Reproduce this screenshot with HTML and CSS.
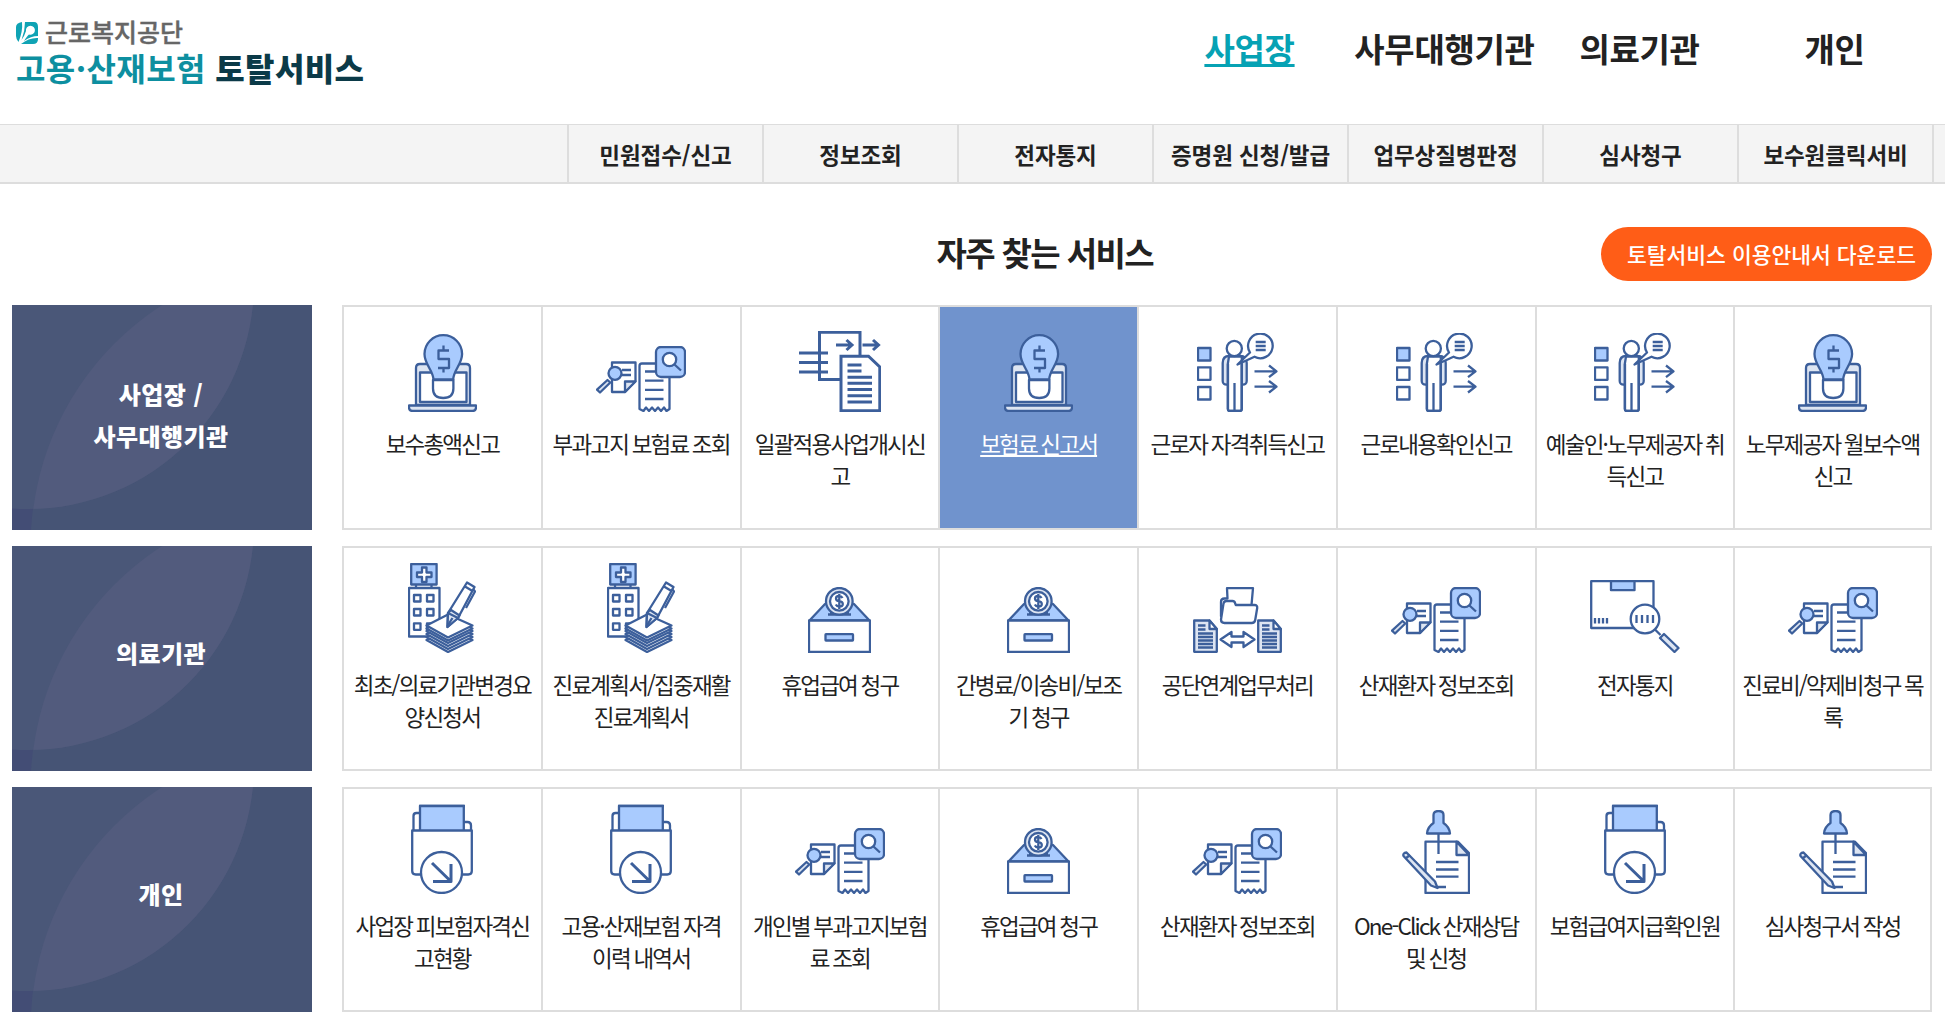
FILE: index.html
```html
<!DOCTYPE html>
<html lang="ko">
<head>
  <meta charset="UTF-8">
  <meta name="viewport" content="width=device-width, initial-scale=1.0">
  <title>근로복지공단 고용·산재보험 토탈서비스</title>
  <link rel="stylesheet" href="styles.css">
</head>
<body>

  <!-- icon sprite -->
  <svg class="sprite" width="0" height="0">
    <symbol id="ic-laptop" viewBox="0 0 69 78">
      <path class="t" d="M8 71V34q0-4 4-4h46q4 0 4 4v37z"/>
      <rect class="w" x="12" y="38.500" width="46.500" height="29.500"/>
      <path class="t" d="M1 71.500h67v2q0 3.500-3.500 3.500h-60Q1 77 1 73.500z"/>
      <path class="w" d="M25 46v8.500q0 9.500 10.200 9.500t10.200-9.500V46z"/>
      <path class="b" d="M25.500 45.500C25 36 16.500 30.500 16.500 20a18.800 18.800 0 0 1 37.600 0C54 30.500 45.500 36 45.200 45.500z"/>
      <path class="n" d="M41 16.500H30.500V25H41v9H30M35.500 11.500v5M35.500 34v4.500"/>
    </symbol>

    <symbol id="ic-search" viewBox="0 0 90 66">
      <path class="w" d="M39.500 16.500H16V46h13l10.500-11z"/>
      <path class="t" d="M29 46V35.500h10.500z"/>
      <path class="n" d="M26 24h9M26 29h9"/>
      <path class="t" d="M11.500 34l2.800 2.500L4 46.500 1 43.700z"/>
      <circle class="b" cx="19" cy="27.300" r="6.500"/>
      <path class="w" d="M43.500 63V20q0-2.500 2.500-2.500h25q2.500 0 2.500 2.500v43l-3 2-2.500-3.500-3 3.500-3-3.500-3 3.500-3-3.500-3 3.500-3-3.500-2.500 3.500z"/>
      <path class="n" d="M49 25.500h18.500M49 34.700h18.500M49 43.800h18.500M49 53h18.500"/>
      <rect class="b" x="60" y="1" width="29" height="30" rx="5"/>
      <circle class="w" cx="73.500" cy="13.500" r="6.700"/>
      <path class="n" d="M78.500 18.500l6.500 6"/>
    </symbol>

    <symbol id="ic-transfer" viewBox="0 0 82 81">
      <g class="bold">
        <path class="n" d="M42 48.500H20.500V1.200H61V25"/>
        <path class="n" d="M0 22h29M0 31.500h29M0 41h29"/>
        <path class="n" d="M37 14h16M47.500 9l5.500 5-5.500 5M63.500 14h16M74 9l5.500 5-5.500 5"/>
        <path class="w" d="M42 25.200h27.500L80.800 36v43.800H42z"/>
        <path class="n" d="M48.500 34h14M48.500 40h14M48.500 46.300H73M48.500 52.300H73M48.500 58.500H73M48.500 64.700H73M48.500 71H73"/>
      </g>
    </symbol>

    <symbol id="ic-worker" viewBox="0 0 81 79">
      <rect class="b" x="1" y="15" width="12.500" height="12.500"/>
      <rect class="w" x="1" y="34.300" width="12.500" height="12.500"/>
      <rect class="w" x="1" y="54" width="12.500" height="12.500"/>
      <path class="t" d="M30.500 51.500q-4.800.5-4.800-3.500V30q0-7 6.500-7h11q6.500 0 6.500 7v18q0 4-4.800 3.500z"/>
      <path class="w" d="M30.800 31v45q0 2 2 2h10q2 0 2-2V31V23.500H32z" stroke="none"/>
      <path class="n" d="M31 31v45q0 2 2 2h9.500q2.200 0 2.200-2V31M37.500 50v28"/>
      <circle class="w" cx="37.300" cy="15.500" r="7.600"/>
      <path class="w" d="M53 19.500A12.300 12.300 0 1 1 57.500 23.700L40.500 31.500z"/>
      <path class="n" d="M58.700 9h10M58.700 13h10M58.700 17h10"/>
      <path class="n" d="M57.500 38.300h22M72 32.500l7.500 5.800-7.500 5.800M57.500 53.700h22M72 48l7.500 5.700-7.500 5.800"/>
    </symbol>

    <symbol id="ic-hospital" viewBox="0 0 68 90">
      <path class="n" d="M8 21v4M23.500 21v4"/>
      <rect class="b" x="3.200" y="1" width="25.400" height="20.500"/>
      <path class="w" d="M14 4.500h4.500v5h5V14h-5v5H14v-5H9V9.500h5z"/>
      <rect class="w" x="1" y="25" width="30.500" height="48.500"/>
      <path class="n" d="M6 32h6.500v6.500H6zM19 32h6.500v6.500H19zM6 46h6.500v6.500H6zM19 46h6.500v6.500H19zM6 60.300h6.500v6.500H6zM19 60.300h6.500v6.500H19z"/>
      <path class="w" d="M18.500 77L40 65.500 64.500 77 40 89z"/>
      <path class="w" d="M18.500 74L40 62.500 64.500 74 40 86z"/>
      <path class="w" d="M18.500 71L40 59.500 64.500 71 40 83z"/>
      <path class="w" d="M18.500 68L40 56.500 64.500 68 40 80z"/>
      <path class="w" d="M18.500 65.500L40 54 64.500 65.500 40 77.500z"/>
      <path class="w" d="M18.500 62.500L40 51.500 64.500 62.500 40 74.500z"/>
      <path class="w" d="M39.500 64l.5-14 19-30.500 7.500 4.500L50 55z"/>
      <path class="t" d="M39.500 64l.5-14 3-3 8.500 5.500-1.500 2.500z"/>
      <path class="n" d="M40 50l10 5M57 23.500l7.500 4.500M65 26l2 2.500L58 45M39.500 63l5-8"/>
    </symbol>

    <symbol id="ic-donate" viewBox="0 0 63 66">
      <path class="b" d="M1.500 33.500L17 17h29l15.500 16.500z"/>
      <rect class="w" x="1" y="33.500" width="61" height="31.500"/>
      <rect class="b" x="17.500" y="47.200" width="27.500" height="6.300" rx=".5"/>
      <path class="n" d="M20 27.500h23M22 25h19"/>
      <circle class="t" cx="31.300" cy="14.300" r="13.300"/>
      <circle class="w" cx="31.300" cy="14.300" r="9.300"/>
      <path class="n" d="M34.500 11q-1-2-3.500-2-3 0-3 2.500t3.300 2.700q3.500.3 3.500 2.900t-3.500 2.500q-2.500 0-3.500-2M31.300 7v15"/>
    </symbol>

    <symbol id="ic-folder" viewBox="0 0 89 66">
      <path class="w" d="M28 29V15q0-3.500 3.500-3.500h3L34 1.200h26L58.500 18z"/>
      <path class="w" d="M28 32.500l2.500-16q.5-2.500 3-2.500h6q2 0 2.500 2l.8 2h18.700q3 0 2.700 3l-2 12q-.5 3-3.500 3H31.500q-3.500 0-3.500-3.500z"/>
      <path class="t" d="M1.200 33.500h15.300l7.300 8.500v22.800H1.200z"/>
      <path class="w" d="M16.500 33.500v8.500h7.300z"/>
      <path class="n" d="M5 38.500h7.500M5 42.500h7.500M5 46.500h15M5 50h15M5 53.500h15M5 57h15M5 60.500h15"/>
      <path class="t" d="M65.200 33.500h15.300l7.300 8.500v22.800H65.200z"/>
      <path class="w" d="M80.500 33.500v8.500h7.300z"/>
      <path class="n" d="M69 38.500h7.500M69 42.500h7.500M69 46.500h15M69 50h15M69 53.500h15M69 57h15M69 60.500h15"/>
      <path class="w" d="M27.500 52.500L38.500 45v4.500h12V45l11 7.500-11 7.500v-4.500h-12V60z"/>
    </symbol>

    <symbol id="ic-parcel" viewBox="0 0 90 73">
      <rect class="w" x="1.200" y="1.200" width="62.300" height="46.800"/>
      <rect class="b" x="21" y="1.200" width="23.500" height="9"/>
      <path class="n" d="M5 38v5.500M9 38v5.500M13 38v5.500M17 38v5.500"/>
      <circle class="w" cx="55" cy="39" r="14.300"/>
      <path class="n" d="M46.500 35v8M52 35v8M57.500 35v8M63 35v8M65 49.500l5.500 5.500"/>
      <path class="t" d="M70 58l4-4 14.500 14-4 4z"/>
    </symbol>

    <symbol id="ic-download" viewBox="0 0 62 90">
      <path class="w" d="M2.500 28V12q0-3 3-3h4v18M52 18h4.500q3.500 0 3.500 3.500V28"/>
      <rect class="b" x="9" y="1.800" width="43.800" height="26"/>
      <path class="n" d="M8 2h46"/>
      <path class="w" d="M1.200 26.500h59.600V67q0 3.500-3.500 3.500H4.700q-3.500 0-3.500-3.500z"/>
      <circle class="w" cx="30.500" cy="68.500" r="20.500"/>
      <path class="n thick" d="M21 59l19 18.500M40 60v17.500H22"/>
    </symbol>

    <symbol id="ic-pin" viewBox="0 0 68 84">
      <path class="w" d="M23.500 31.700H56L67 43v40H23.500z"/>
      <path class="t" d="M54.500 31.700V45H67z"/>
      <path class="n" d="M36.500 23v21M34 52h22.500M34 59.500h22.500M34 66.700h22.500M34 77h10"/>
      <path class="b" d="M31.500 5q0-4 5-4t5 4v8q6 4 6.500 10.500H25Q25.500 17 31.500 13z"/>
      <path class="t" d="M1.500 46q-1-3 3-3.500L33 71.500l2.500 6.500-6.500-2.500z"/>
      <path class="n" d="M3.500 48.500L8 45"/>
    </symbol>

    <symbol id="bg-circles" viewBox="0 0 300 225">
      <clipPath id="leaf"><circle cx="16" cy="-22" r="226"/></clipPath>
      <rect width="300" height="225" fill="#434d75"/>
      <path d="M19 225A285 285 0 0 1 150 0H300V225z" fill="#465475"/>
      <circle cx="16" cy="-22" r="226" fill="#4a5778"/>
      <circle cx="304" cy="240" r="285" fill="#525b7d" clip-path="url(#leaf)"/>
    </symbol>
  </svg>

  <header>
    <h1 class="logo">
      <span class="logo-top">
        <svg class="logo-mark" viewBox="0 0 22 22">
          <path d="M9 0H18Q22 0 22 5V14Q15 14 8 19Q11 14 13 12.500A4.500 4.500 0 1 0 10 9Q8.500 14 5.500 18Q9 9 9 0z" fill="#0fa3b4"/>
          <path d="M6 0Q7 9 2.500 20Q0 17 0 14V5Q0 1 6 0zM5 22Q13 15.500 22 16V17Q22 22 17 22z" fill="#0fa3b4"/>
        </svg>
        <span>근로복지공단</span>
      </span>
      <span class="logo-bottom">고용·산재보험 <b>토탈서비스</b></span>
    </h1>
    <nav class="main-nav">
      <a href="#" class="active">사업장</a>
      <a href="#">사무대행기관</a>
      <a href="#">의료기관</a>
      <a href="#">개인</a>
    </nav>
  </header>

  <nav class="sub-nav">
    <a href="#">민원접수/신고</a>
    <a href="#">정보조회</a>
    <a href="#">전자통지</a>
    <a href="#">증명원 신청/발급</a>
    <a href="#">업무상질병판정</a>
    <a href="#">심사청구</a>
    <a href="#">보수원클릭서비</a>
    <span class="end"></span>
  </nav>

  <main>
    <div class="title-bar">
      <h2>자주 찾는 서비스</h2>
      <a href="#" class="btn-guide">토탈서비스 이용안내서 다운로드</a>
    </div>

    <section class="service">
      <h3 class="two-line"><svg class="deco"><use href="#bg-circles"/></svg><span>사업장 /<br>사무대행기관</span></h3>
      <ul>
        <li><a href="#"><i><svg width="69" height="78"><use href="#ic-laptop"/></svg></i><span>보수총액신고</span></a></li>
        <li><a href="#"><i><svg width="90" height="66"><use href="#ic-search"/></svg></i><span>부과고지 보험료 조회</span></a></li>
        <li><a href="#"><i><svg width="82" height="81"><use href="#ic-transfer"/></svg></i><span>일괄적용사업개시신<br>고</span></a></li>
        <li class="on"><a href="#"><i><svg width="69" height="78"><use href="#ic-laptop"/></svg></i><span>보험료 신고서</span></a></li>
        <li><a href="#"><i><svg width="81" height="79"><use href="#ic-worker"/></svg></i><span>근로자 자격취득신고</span></a></li>
        <li><a href="#"><i><svg width="81" height="79"><use href="#ic-worker"/></svg></i><span>근로내용확인신고</span></a></li>
        <li><a href="#"><i><svg width="81" height="79"><use href="#ic-worker"/></svg></i><span>예술인·노무제공자 취<br>득신고</span></a></li>
        <li><a href="#"><i><svg width="69" height="78"><use href="#ic-laptop"/></svg></i><span>노무제공자 월보수액<br>신고</span></a></li>
      </ul>
    </section>

    <section class="service">
      <h3><svg class="deco"><use href="#bg-circles"/></svg><span>의료기관</span></h3>
      <ul>
        <li><a href="#"><i><svg width="68" height="90"><use href="#ic-hospital"/></svg></i><span>최초/의료기관변경요<br>양신청서</span></a></li>
        <li><a href="#"><i><svg width="68" height="90"><use href="#ic-hospital"/></svg></i><span>진료계획서/집중재활<br>진료계획서</span></a></li>
        <li><a href="#"><i><svg width="63" height="66"><use href="#ic-donate"/></svg></i><span>휴업급여 청구</span></a></li>
        <li><a href="#"><i><svg width="63" height="66"><use href="#ic-donate"/></svg></i><span>간병료/이송비/보조<br>기 청구</span></a></li>
        <li><a href="#"><i><svg width="89" height="66"><use href="#ic-folder"/></svg></i><span>공단연계업무처리</span></a></li>
        <li><a href="#"><i><svg width="90" height="66"><use href="#ic-search"/></svg></i><span>산재환자 정보조회</span></a></li>
        <li><a href="#"><i><svg width="90" height="73"><use href="#ic-parcel"/></svg></i><span>전자통지</span></a></li>
        <li><a href="#"><i><svg width="90" height="66"><use href="#ic-search"/></svg></i><span>진료비/약제비청구 목<br>록</span></a></li>
      </ul>
    </section>

    <section class="service">
      <h3><svg class="deco"><use href="#bg-circles"/></svg><span>개인</span></h3>
      <ul>
        <li><a href="#"><i><svg width="62" height="90"><use href="#ic-download"/></svg></i><span>사업장 피보험자격신<br>고현황</span></a></li>
        <li><a href="#"><i><svg width="62" height="90"><use href="#ic-download"/></svg></i><span>고용·산재보험 자격<br>이력 내역서</span></a></li>
        <li><a href="#"><i><svg width="90" height="66"><use href="#ic-search"/></svg></i><span>개인별 부과고지보험<br>료 조회</span></a></li>
        <li><a href="#"><i><svg width="63" height="66"><use href="#ic-donate"/></svg></i><span>휴업급여 청구</span></a></li>
        <li><a href="#"><i><svg width="90" height="66"><use href="#ic-search"/></svg></i><span>산재환자 정보조회</span></a></li>
        <li><a href="#"><i><svg width="68" height="84"><use href="#ic-pin"/></svg></i><span>One-Click 산재상담<br>및 신청</span></a></li>
        <li><a href="#"><i><svg width="62" height="90"><use href="#ic-download"/></svg></i><span>보험급여지급확인원</span></a></li>
        <li><a href="#"><i><svg width="68" height="84"><use href="#ic-pin"/></svg></i><span>심사청구서 작성</span></a></li>
      </ul>
    </section>
  </main>

</body>
</html>
```
FILE: styles.css
```css
* {
  box-sizing: border-box;
  margin: 0;
  padding: 0;
}

body {
  font-family: 'Noto Sans CJK KR', sans-serif;
  color: #222;
  background: #fff;
  overflow: hidden;
}

a {
  color: inherit;
  text-decoration: none;
}

ul {
  list-style: none;
}

.sprite {
  display: block;
}

/* icon colours */
.w, .t, .b, .n {
  stroke: #3c5f9b;
  stroke-width: 2.3;
  stroke-linejoin: round;
}

.w { fill: #fff; }
.t { fill: #dde5f2; }
.b { fill: #a9cbfe; }
.n { fill: none; }

.bold * {
  stroke-width: 3;
  stroke-linejoin: miter;
}

.thick {
  stroke-width: 3;
}

/* header */
header {
  display: flex;
  justify-content: space-between;
  height: 124px;
  padding: 0 13px 0 16px;
}

.logo {
  display: flex;
  flex-direction: column;
  padding-top: 17px;
}

.logo-top {
  display: flex;
  align-items: center;
  gap: 7px;
  height: 32px;
  line-height: 28px;
  font-size: 25px;
  font-weight: 500;
  color: #666;
}

.logo-top span {
  height: 32px;
  -webkit-text-stroke: 0.4px #666;
}

.logo-mark {
  width: 22px;
  height: 22px;
}

.logo-bottom {
  height: 38px;
  line-height: 37px;
  font-size: 32px;
  font-weight: 700;
  letter-spacing: 0.4px;
  color: #0d8fa0;
}

.logo-bottom b {
  color: #0b3a48;
}

.main-nav {
  display: flex;
  height: 96px;
  line-height: 96px;
  font-size: 33px;
  font-weight: 700;
  letter-spacing: -0.3px;
  text-align: center;
}

.main-nav a {
  width: 195px;
  white-space: nowrap;
}

.main-nav .active {
  color: #06a2b4;
  text-decoration: underline;
}

.sub-nav {
  display: flex;
  justify-content: flex-end;
  height: 60px;
  background: #f4f4f4;
  border-top: 1px solid #ddd;
  border-bottom: 2px solid #ddd;
}

.sub-nav a {
  width: 195px;
  border-left: 2px solid #ddd;
  line-height: 58px;
  font-size: 22.5px;
  font-weight: 700;
  letter-spacing: -0.1px;
  text-align: center;
}

.sub-nav .end {
  width: 13px;
  border-left: 2px solid #ddd;
}

/* services */
main {
  padding: 43px 13px 0 12px;
}

.title-bar {
  display: flex;
  justify-content: flex-end;
  align-items: center;
  gap: 448px;
  height: 54px;
  margin-bottom: 24px;
}

.title-bar h2 {
  padding-bottom: 5px;
  font-size: 33px;
  font-weight: 700;
  letter-spacing: -1.6px;
}

.btn-guide {
  width: 331px;
  height: 54px;
  padding-left: 26px;
  border-radius: 27px;
  background: #ff5d17;
  color: #fff;
  font-size: 21.5px;
  font-weight: 500;
  line-height: 53px;
  white-space: nowrap;
}

.service {
  display: flex;
  gap: 30px;
  height: 225px;
  margin-bottom: 16px;
}

.service h3 {
  position: relative;
  display: flex;
  align-items: center;
  justify-content: center;
  width: 300px;
  padding: 0 2px 11px 0;
  color: #fff;
  font-size: 24px;
  font-weight: 900;
  letter-spacing: 0.4px;
  line-height: 42px;
  text-align: center;
}

.service h3.two-line {
  padding-bottom: 5px;
}

.service h3 span {
  position: relative;
}

.deco {
  position: absolute;
  top: 0;
  left: 0;
  width: 300px;
  height: 225px;
}

.service ul {
  flex: 1;
  display: grid;
  grid-template-columns: repeat(8, 1fr);
  border: solid #ddd;
  border-width: 2px 0;
}

.service li {
  border-left: 2px solid #ddd;
}

.service li:last-child {
  border-right: 2px solid #ddd;
}

.service li a {
  display: block;
  height: 100%;
  padding: 15px 0 0;
  font-size: 22.5px;
  letter-spacing: -1.8px;
  word-spacing: -1px;
  line-height: 32px;
  text-align: center;
}

.service i {
  display: flex;
  justify-content: center;
  align-items: flex-end;
  height: 90px;
  margin-bottom: 15px;
}

.service .on a {
  background: #7093cd;
  color: #fff;
  text-decoration: underline;
}
```
